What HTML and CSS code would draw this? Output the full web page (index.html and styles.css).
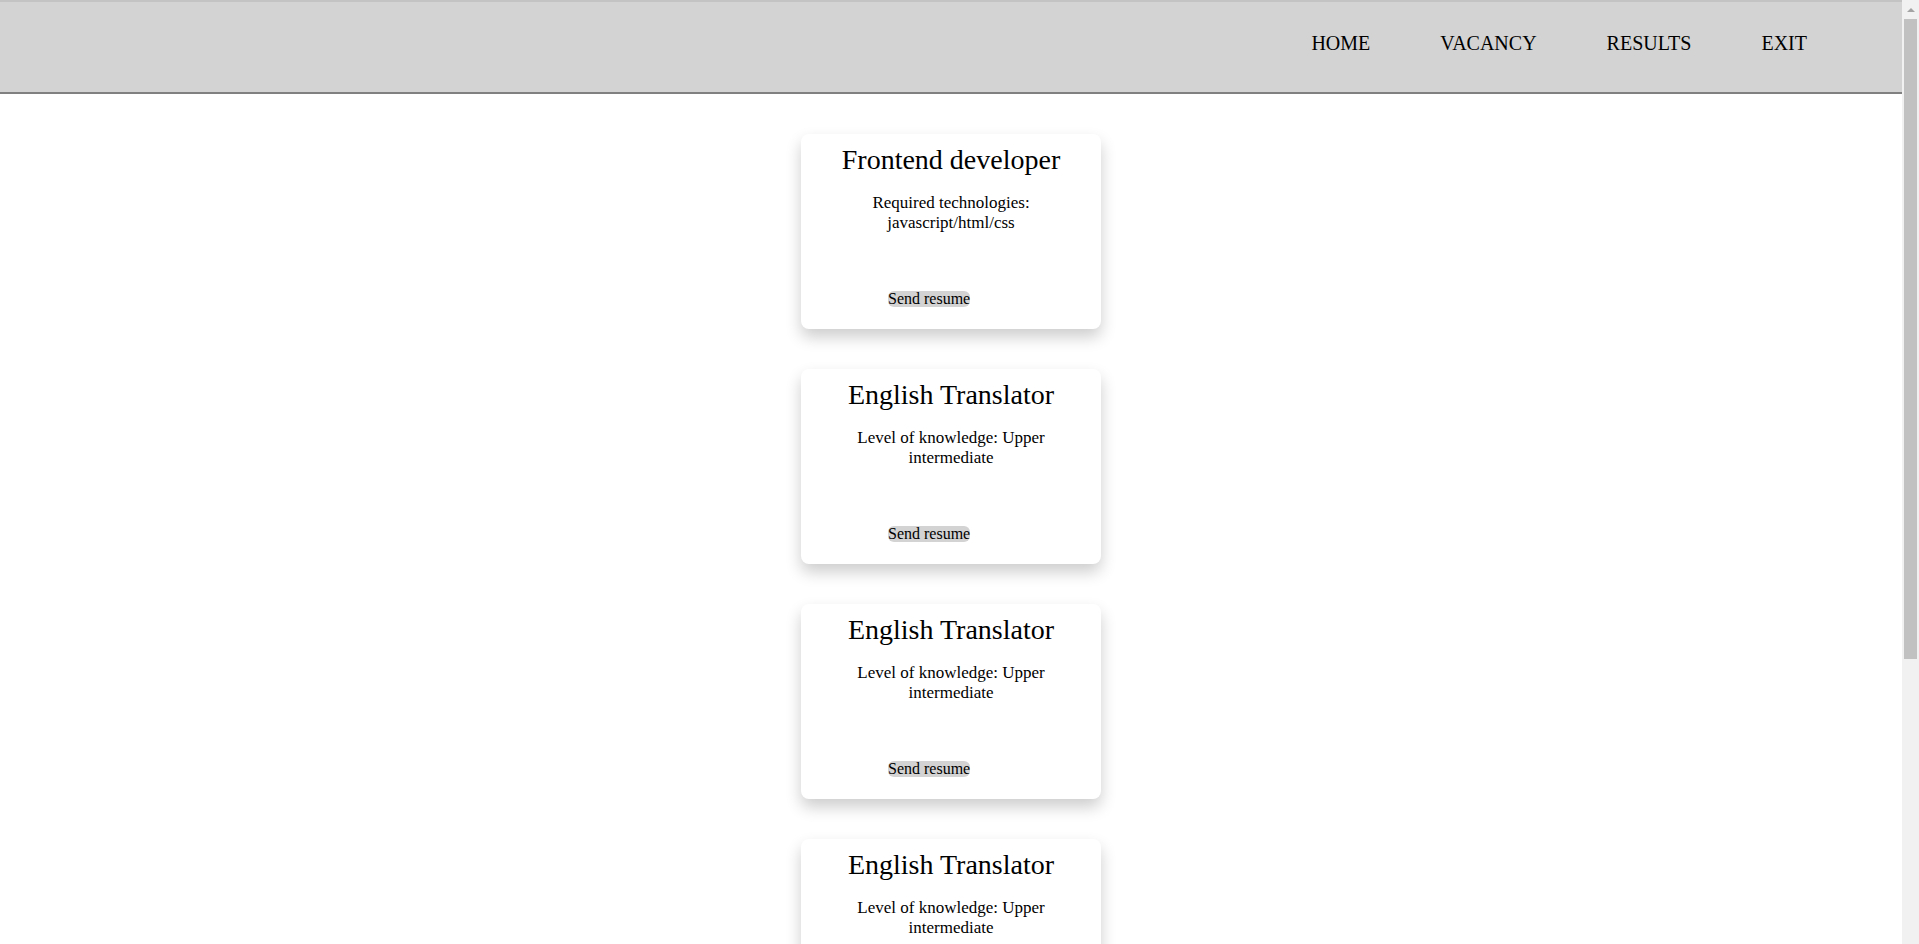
FILE: index.html
```html
<!DOCTYPE html>
<html lang="en">
<head>
<meta charset="utf-8">
<title>Vacancies</title>
<link rel="stylesheet" href="styles.css">
</head>
<body>
<header class="topbar">
  <nav class="nav">
    <a class="nav-link" href="#">HOME</a>
    <a class="nav-link" href="#">VACANCY</a>
    <a class="nav-link" href="#">RESULTS</a>
    <a class="nav-link" href="#">EXIT</a>
  </nav>
</header>
<main class="list">
  <section class="card">
    <h2 class="card-title">Frontend developer</h2>
    <p class="card-text">Required technologies: javascript/html/css</p>
    <button class="card-btn">Send resume</button>
  </section>
  <section class="card">
    <h2 class="card-title">English Translator</h2>
    <p class="card-text">Level of knowledge: Upper intermediate</p>
    <button class="card-btn">Send resume</button>
  </section>
  <section class="card">
    <h2 class="card-title">English Translator</h2>
    <p class="card-text">Level of knowledge: Upper intermediate</p>
    <button class="card-btn">Send resume</button>
  </section>
  <section class="card">
    <h2 class="card-title">English Translator</h2>
    <p class="card-text">Level of knowledge: Upper intermediate</p>
    <button class="card-btn">Send resume</button>
  </section>
</main>
<div class="scrollbar" aria-hidden="true">
  <div class="scroll-arrow"><span class="scroll-tri"></span></div>
  <div class="scroll-thumb"></div>
</div>
</body>
</html>
```
FILE: styles.css
```css
html, body {
  margin: 0;
  padding: 0;
}
body {
  font-family: "Liberation Serif", "Times New Roman", serif;
  color: #000;
  background: #fff;
  margin-right: 17px;
}
.topbar {
  background: #d3d3d3;
  border-top: 2px solid #c3c3c3;
  border-bottom: 2px solid #808080;
  height: 90px;
}
.nav {
  display: flex;
  justify-content: flex-end;
  gap: 70px;
  padding: 30px 95px 0 0;
}
.nav-link {
  font-size: 20px;
  line-height: 23px;
  color: #000;
  text-decoration: none;
}
.list {
  display: flex;
  flex-direction: column;
  align-items: center;
  gap: 40px;
  padding: 40px 0 40px;
}
.card {
  width: 300px;
  height: 195px;
  box-sizing: border-box;
  padding-top: 10px;
  background: #fff;
  border-radius: 8px;
  box-shadow: 0 8px 16px 0 rgba(0, 0, 0, 0.2);
  display: flex;
  flex-direction: column;
  text-align: center;
}
.card-title {
  margin: 0;
  font-size: 28px;
  font-weight: normal;
}
.card-text {
  margin: 17px 0 0;
  padding: 0 50px;
  font-size: 17px;
}
.card-btn {
  align-self: flex-start;
  margin: auto 0 22px 87px;
  padding: 0;
  border: none;
  border-radius: 6px;
  background: #d3d3d3;
  font-family: "Liberation Serif", "Times New Roman", serif;
  font-size: 16px;
  line-height: 16px;
  height: 16px;
  color: #000;
}
.scrollbar {
  position: fixed;
  top: 0;
  right: 0;
  width: 17px;
  height: 100vh;
  background: #f1f1f1;
  display: flex;
  flex-direction: column;
  align-items: center;
}
.scroll-arrow {
  height: 19px;
  width: 17px;
  display: flex;
  align-items: center;
  justify-content: center;
}
.scroll-tri {
  width: 0;
  height: 0;
  border-left: 4px solid transparent;
  border-right: 4px solid transparent;
  border-bottom: 4px solid #a3a3a3;
}
.scroll-thumb {
  width: 13px;
  height: 640px;
  background: #c1c1c1;
}
```
